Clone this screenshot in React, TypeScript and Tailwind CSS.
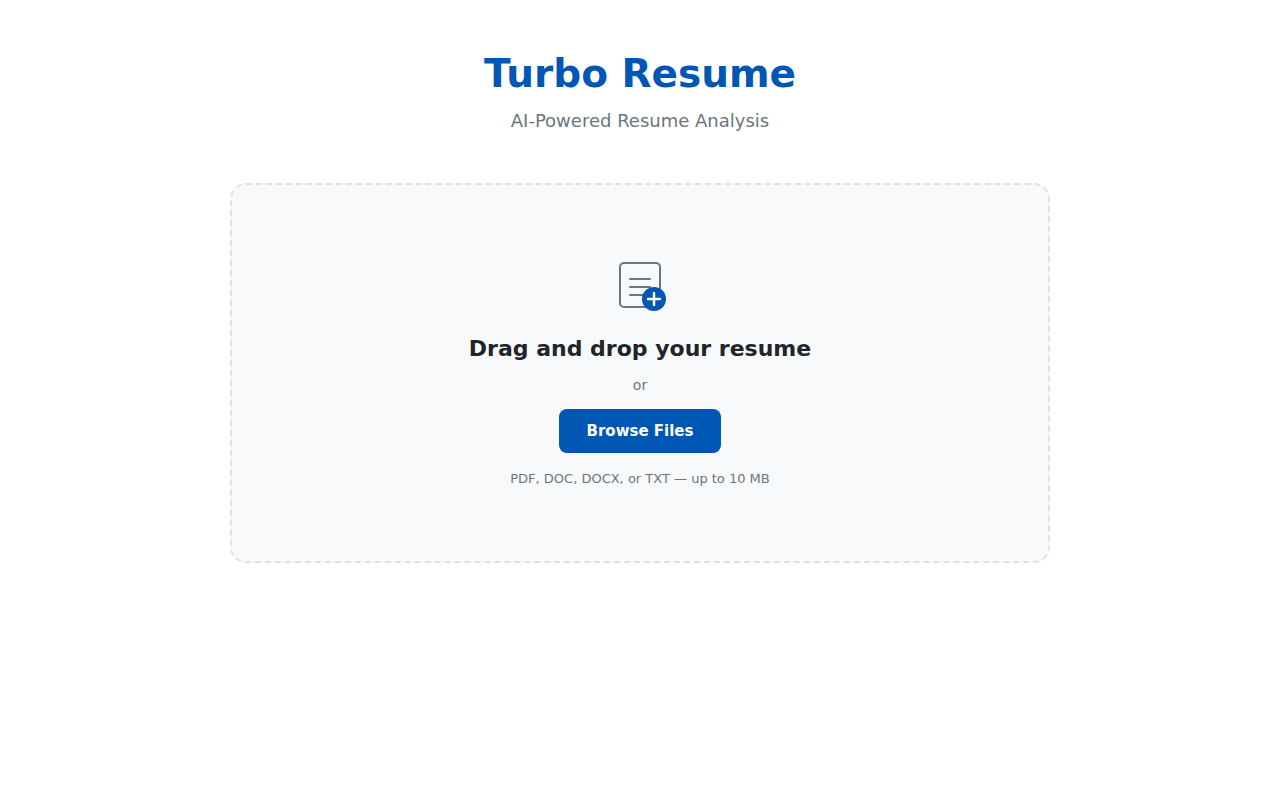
import { useRef } from 'react';

function ResumeIcon() {
  return (
    <svg width="64" height="64" viewBox="0 0 64 64" fill="none" aria-hidden="true">
      <rect x="12" y="10" width="40" height="44" rx="4" stroke="#6c757d" strokeWidth="2" />
      <path d="M22 26h20M22 34h20M22 42h14" stroke="#6c757d" strokeWidth="2" strokeLinecap="round" />
      <circle cx="46" cy="46" r="12" fill="#0056b3" />
      <path d="M46 40v12M40 46h12" stroke="#fff" strokeWidth="2.5" strokeLinecap="round" />
    </svg>
  );
}

export default function App() {
  const fileInput = useRef<HTMLInputElement>(null);

  return (
    <div className="min-h-screen bg-white px-5 font-['DejaVu_Sans',sans-serif] text-[#212529]">
      <div className="mx-auto max-w-[820px] pt-12">
        <header className="mb-[50px] text-center">
          <h1 className="text-[39px] leading-[52px] font-bold text-[#0056b3]">Turbo Resume</h1>
          <p className="mt-2 text-lg leading-[25px] text-[#6c757d]">AI-Powered Resume Analysis</p>
        </header>
        <main className="flex min-h-[380px] flex-col items-center justify-center rounded-2xl border-2 border-dashed border-[#dee2e6] bg-[#f8f9fa] px-6 pb-1 text-center">
          <ResumeIcon />
          <h2 className="mt-4 text-[22px] leading-8 font-bold">Drag and drop your resume</h2>
          <p className="mt-2 text-sm leading-6 text-[#6c757d]">or</p>
          <button
            type="button"
            onClick={() => fileInput.current?.click()}
            className="mt-3 h-11 cursor-pointer rounded-lg bg-[#0056b3] px-7 text-[15px] font-bold text-white"
          >
            Browse Files
          </button>
          <input ref={fileInput} type="file" accept=".pdf,.doc,.docx,.txt" aria-label="Resume file" className="hidden" />
          <p className="mt-4 text-[13px] leading-5 text-[#6c757d]">PDF, DOC, DOCX, or TXT — up to 10 MB</p>
        </main>
      </div>
    </div>
  );
}
